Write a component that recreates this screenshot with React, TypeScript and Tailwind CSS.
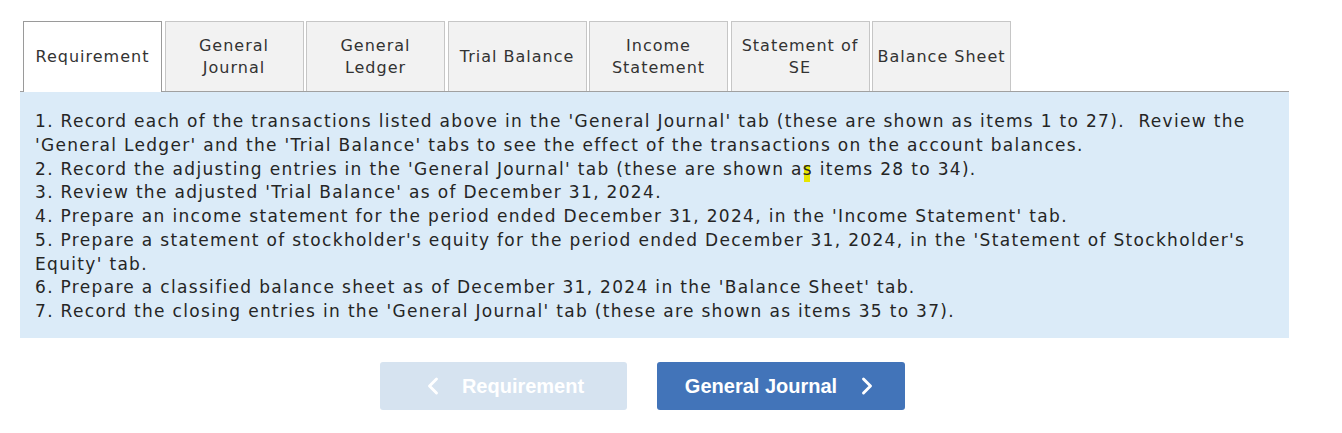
import { ChevronLeft, ChevronRight } from 'lucide-react'

const tabs = [
  { label: 'Requirement', active: true },
  { label: 'General\nJournal' },
  { label: 'General\nLedger' },
  { label: 'Trial Balance' },
  { label: 'Income\nStatement' },
  { label: 'Statement of\nSE' },
  { label: 'Balance Sheet' },
]

export default function App() {
  return (
    <div className="min-h-[433px] bg-white pt-[21px] px-[20px] text-[#252525] font-['DejaVu_Sans',Verdana,sans-serif]">
      <div className="w-[1269px]">
        {/* TABS */}
        <div className="flex gap-[2.5px] pl-[3px]">
          {tabs.map((t) => (
            <div
              key={t.label}
              className={
                t.active
                  ? 'w-[139px] h-[71px] flex items-center justify-center text-center whitespace-pre-line text-[16px] leading-[22px] tracking-[1px] bg-white border border-b-0 border-[#9a9a9a] text-[#333]'
                  : 'w-[139px] h-[70px] flex items-center justify-center text-center whitespace-pre-line text-[16px] leading-[22px] tracking-[1px] bg-[#f2f2f2] border border-b-0 border-[#c6c6c6] text-[#333]'
              }
            >
              {t.label}
            </div>
          ))}
        </div>

        {/* CONTENT */}
        <div className="border-t border-[#a0a0a0] bg-[#dbebf8] px-[15px] pt-[18px] pb-[14px] text-[17px] leading-[23.75px] tracking-[1.32px] -mt-px">
          <p>
            1. Record each of the transactions listed above in the 'General Journal' tab (these are shown as items 1 to 27).&nbsp; Review the 'General Ledger' and the 'Trial Balance' tabs to see the effect of the transactions on the account balances.
          </p>
          <p>
            2. Record the adjusting entries in the 'General Journal' tab (these are shown a
            <span className="relative">
              <span className="absolute left-[1px] top-[6px] w-[6px] h-[17px] bg-[#e6e600]" />
              <span className="relative">s</span>
            </span>{' '}
            items 28 to 34).
          </p>
          <p>3. Review the adjusted 'Trial Balance' as of December 31, 2024.</p>
          <p>4. Prepare an income statement for the period ended December 31, 2024, in the 'Income Statement' tab.</p>
          <p>
            5. Prepare a statement of stockholder's equity for the period ended December 31, 2024, in the 'Statement of Stockholder's Equity' tab.
          </p>
          <p>6. Prepare a classified balance sheet as of December 31, 2024 in the 'Balance Sheet' tab.</p>
          <p>7. Record the closing entries in the 'General Journal' tab (these are shown as items 35 to 37).</p>
        </div>

        {/* NAV BUTTONS */}
        <div className="flex gap-[30px] pl-[360px] pt-[24px] font-['Liberation_Sans',Arial,sans-serif] font-bold text-[20px] text-white">
          <button className="w-[247px] h-[48px] rounded-[3px] bg-[#d6e3f0] flex items-center justify-center gap-[15px] pr-[4px]">
            <ChevronLeft size={28} strokeWidth={2.5} />
            <span>Requirement</span>
          </button>
          <button className="w-[248px] h-[48px] rounded-[3px] bg-[#4274b9] flex items-center justify-center gap-[16px] pl-[4px]">
            <span>General Journal</span>
            <ChevronRight size={28} strokeWidth={2.5} />
          </button>
        </div>
      </div>
    </div>
  )
}
